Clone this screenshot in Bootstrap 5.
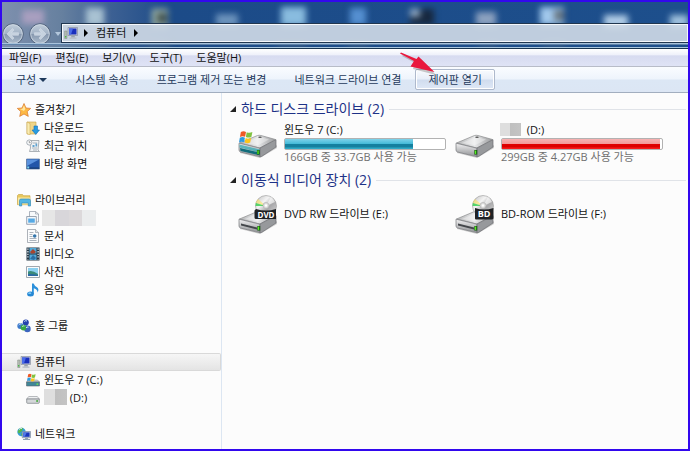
<!DOCTYPE html>
<html lang="ko">
<head>
<meta charset="utf-8">
<meta name="viewport" content="width=device-width, initial-scale=1">
<title>컴퓨터</title>
<link href="https://cdn.jsdelivr.net/npm/bootstrap@5.3.0/dist/css/bootstrap.min.css" rel="stylesheet">
<style>
body{font-family:"Open Sans","Noto Sans CJK KR",sans-serif;font-size:11px;line-height:18px;color:#111;background:#fcfcfc}
.win{border:2px solid #3208ee;min-height:100vh}
.win button,.win a{color:inherit;font:inherit;text-decoration:none;white-space:nowrap}
svg{display:block;flex:none}
.titlebar{height:47px;padding-top:21px;background:linear-gradient(90deg,#7e90ae 0,#66809f 60px,#3c6093 110px,#1c4b88 170px,#1d4f8c 100%);overflow:hidden}
.wallpaper{filter:blur(3px)}
.address{height:20px;border:1px solid #20364f;border-right:0;box-shadow:inset 0 0 0 1px #f4f7fb;background:rgba(214,223,233,.88);padding-left:2px}
.address .step{margin:0 8px 0 6px}
.shine{height:6px;border-top:1px solid #a9c3dc;border-bottom:1px solid #183550;box-shadow:inset 0 -1px #a9c6de,inset 0 1px #5f83a9}
.navbtns{width:59px}
.menus{height:18px;background:linear-gradient(#fff 0,#eef0fa 35%,#d7dbf0 40%,#dfe3f5 100%);border-bottom:1px solid #b8bcc8}
.menus button{padding:0 7px;line-height:17px}
.tools{height:26px;padding-top:2px;background:linear-gradient(#fafcff 0,#eef4fc 48%,#dce7f5 52%,#dce6f4 100%);border-bottom:1px solid #a2aebf;color:#1e395b}
.tools button{height:21px;padding:0 14px;line-height:19px}
.tools .raised{border:1px solid #aeb9cc!important;border-radius:2px;background:linear-gradient(#f9fbfe 0,#e8eef8 48%,#d0dcee 52%,#dfe8f6 100%);padding:0 12px;box-shadow:inset 0 0 0 1px #fff}
.caret{border:4px solid transparent;border-top-color:#1e395b;border-bottom:0;margin-left:3px}
.pointer{left:397px;top:49px;z-index:2}
.side{width:220px;border-right:1px solid #dce6f2;padding-top:8px}
.side a{height:18px;padding-left:15px;gap:4px}
.side a.sub{padding-left:24px}
.side .gap-row{height:18px}
.side a.active{border:1px solid #d9d9d9;border-left:0;border-radius:0 2px 2px 0;background:linear-gradient(#f6f6f6,#e4e4e4)}
.mosaic{display:inline-block;vertical-align:top;background:linear-gradient(90deg,#dedede 0,#dedede 48%,#bfbfbf 48%,#c4c4c4 100%)}
.mz1{width:54px;height:16px;margin-left:-2px;background:linear-gradient(90deg,#e6e6e6 0 25%,#d8d6da 25% 50%,#dcd9db 50% 74%,#ebedee 74%)}
.mz2{width:23px;height:16px}
.mz3{width:21px;height:13px;margin:1px 3px 0 -1px}
.pane{padding:7px 2px 0 8px}
.pane h2{font-size:14px;line-height:18px;color:#1e3287;margin:0;gap:5px;font-weight:400}
.pane h2 button{color:#1e3287}
.pane h2::after{content:"";flex:1;height:1px;background:#e0e3e8}
.tri{width:0;height:0;border-left:6px solid transparent;border-bottom:6px solid #222;margin-right:5px}
.drives{grid-template-columns:repeat(auto-fill,217px);padding-left:8px}
.drive{height:53px;gap:6px;padding-bottom:3px}
.drive .name{line-height:16px}
.drive .info{line-height:14px;color:#707070}
.meter{height:12px;width:162px;border:1px solid #b2b2b2;border-radius:2px;background:#fff;display:block}
.meter span{display:block;height:10px}
.teal{background:linear-gradient(#7fd3ea 0,#48bcd9 45%,#14809f 55%,#16809e 75%,#36b4d0 100%)}
.full{background:linear-gradient(#f6b3b3 0,#f39a9a 45%,#e00000 55%,#da0000 75%,#ff2020 100%)}
</style>
<script src="https://cdn.jsdelivr.net/npm/bootstrap@5.3.0/dist/js/bootstrap.bundle.min.js"></script>
</head>
<body>
<svg width="0" height="0" class="position-absolute" aria-hidden="true">
<defs>
<linearGradient id="top" x1="0" x2="1"><stop offset="0" stop-color="#b5b6b8"/><stop offset=".5" stop-color="#e8e9ea"/><stop offset="1" stop-color="#9a9b9d"/></linearGradient>
<linearGradient id="face" x1="0" y1="0" x2="0" y2="1"><stop offset="0" stop-color="#f3f3f4"/><stop offset="1" stop-color="#8d8f92"/></linearGradient>
<linearGradient id="disc" x1="0" x2="1" y1="0" y2="1"><stop offset="0" stop-color="#bbb"/><stop offset=".35" stop-color="#f4f4f4"/><stop offset=".6" stop-color="#a8a8aa"/><stop offset="1" stop-color="#ddd"/></linearGradient>
<linearGradient id="orb" x1="0" x2="0" y1="0" y2="1"><stop offset="0" stop-color="#c2cedb"/><stop offset=".48" stop-color="#a3b3c6"/><stop offset=".52" stop-color="#8798af"/><stop offset="1" stop-color="#b0c0d0"/></linearGradient>
<symbol id="pc" viewBox="0 0 14 14"><path d="M.7 5h2.200v7.500H.7z" fill="#b8c0b8" stroke="#7c857c" stroke-width=".5"/><path d="M1 10h1.300v1.500H1z" fill="#4b4"/><path d="M4 1.500h9.500v8H4z" fill="#c9ced8" stroke="#7c8597" stroke-width=".6"/><path d="M5 2.500h7.500v6H5z" fill="#1a2fbd"/><path d="M5 2.500h4l-2 6H5z" fill="#4a6be8"/><path d="M7.500 9.500h3l.6 2H7z" fill="#9aa2ad"/><path d="M5.500 11.500h7v1.300h-7z" fill="#b7bdc7"/></symbol>
<symbol id="flag" viewBox="0 0 12 12"><path d="M1.600 1.800Q3.800.4 6 1.700L5.200 5.800Q3 4.700 .8 6z" fill="#ef5a26"/><path d="M6.600 2Q9 3 11.500 1.800L10.600 6Q8.300 7 5.900 6z" fill="#80c241"/><path d="M.7 6.700Q3 5.400 5.100 6.600L4.300 10.500Q2.200 9.400 0 10.700z" fill="#2f9be0"/><path d="M5.700 6.900Q8 8 10.400 6.900L9.600 10.800Q7.300 11.900 4.900 10.800z" fill="#fcc51c"/></symbol>
<symbol id="hdd" viewBox="0 0 40 26"><path d="M2 19 22 25 39 13v3L22 26 2 21z" fill="#777" opacity=".35"/><path d="M1.500 11 19.500 3.500Q21 3 23 3.500L37.500 7.500 22 16z" fill="url(#top)" stroke="#8a8b8d" stroke-width=".7"/><path d="M1 11.200 22 16.200v8.600L2.500 20Q1 19.500 1 18z" fill="url(#face)" stroke="#77797c" stroke-width=".7"/><path d="M22 16 38 7.700v7.300L23.500 24.500 22 24.800z" fill="#97999c" stroke="#6d6f72" stroke-width=".7"/><path d="M7 11 21 5 31 7.500 20 13.300z" fill="#fff" opacity=".35"/><ellipse cx="22" cy="5.300" rx="1.800" ry=".8" fill="#555"/></symbol>
<symbol id="led" viewBox="0 0 4 6"><path d="M0 0h3.500v5.500H0z" fill="#1b5e17"/><path d="M.7.700h1.500v4H.7z" fill="#58f21e"/></symbol>
<symbol id="optical" viewBox="0 0 40 40"><use href="#hdd" x="0" y="14" width="40" height="26"/><path d="M3 29.500 19 33.500v2L3 31.500z" fill="#44474b"/><circle cx="28" cy="12" r="10.500" fill="url(#disc)" stroke="#999" stroke-width=".6"/><path d="M28 12 17.700 9A10.500 10.500 0 0 1 20 5z" fill="#ffe14a" opacity=".5"/><path d="M28 12 17.500 12 17.800 9z" fill="#32d04a" opacity=".8"/><path d="M28 12 33 3A10 10 0 0 1 37 8z" fill="#fff" opacity=".6"/><circle cx="28" cy="11.500" r="3" fill="#ddd" stroke="#aaa" stroke-width=".6"/><circle cx="28" cy="11.500" r="1.200" fill="#fff"/><use href="#led" x="19" y="32" width="4" height="5"/></symbol>
<symbol id="libs" viewBox="0 0 14 14"><path d="M.5 2.500 1.500 1.500h4l1 1.200h6.500v9H.5z" fill="#e9c95f" stroke="#c29d3a" stroke-width=".6"/><path d="M1 4.500h12v7H1z" fill="#fae9a3"/><path d="M2.500 13V7.500Q2.500 6 4 6h8q1.500 0 1.500 1.500V13h-2.200V10H4.700v3z" fill="#54b6e3" stroke="#2986b8" stroke-width=".6"/></symbol>
</defs>
</svg>
<div class="win d-flex flex-column position-relative">
<header class="titlebar position-relative">
  <svg class="wallpaper position-absolute top-0 start-0" width="100%" height="47" viewBox="0 0 686 47" preserveAspectRatio="xMinYMin slice" aria-hidden="true">
    <path d="M20 8h22v14H20z" fill="#a99fc0"/><path d="M84 6h18v18H84z" fill="#a9c2d2"/><path d="M150 7h16v18h-16z" fill="#9db3a5"/><path d="M155 11h10v10h-10z" fill="#40504f"/><path d="M214 12h22v12h-22z" fill="#6d94bd"/><path d="M279 5h25v19h-25z" fill="#89bcdf"/><path d="M348 6h16v17h-16z" fill="#5590d1"/><path d="M408 7h24v16h-24z" fill="#17283f"/><path d="M408 7h10v8h-10z" fill="#91a9c1"/><path d="M474 10h20v14h-20z" fill="#8da2c0"/><path d="M538 5h24v18h-24z" fill="#a2c9ed"/><path d="M552 8h10v11h-10z" fill="#687681"/><path d="M602 13h24v12h-24z" fill="#b4cfe8"/><path d="M668 13h20v12h-20z" fill="#a2c3df"/>
    <path d="M82 40h24v4H82zM145 40h24v4h-24zM275 40h30v4h-30zM345 40h22v4h-22zM476 40h20v4h-20zM540 40h24v4h-24z" fill="#65757f" opacity=".6"/>
  </svg>
  <div class="d-flex position-relative">
    <div class="navbtns d-flex align-items-center">
      <button type="button" class="btn border-0 p-0" aria-label="뒤로"><svg width="23" height="22" viewBox="0 0 23 22"><circle cx="11" cy="11" r="10.300" fill="url(#orb)" stroke="#52637d"/><circle cx="11" cy="11" r="9.300" fill="none" stroke="#d0dae5" stroke-width=".8"/><path d="M5 11l5.500-5.500 1.500 1.500-2.500 2.700h7v2.600h-7l2.500 2.700-1.500 1.500z" fill="#c6d2df" stroke="#dbe3ec" stroke-width=".5"/></svg></button>
      <button type="button" class="btn border-0 p-0 ms-1" aria-label="앞으로"><svg width="22" height="22" viewBox="0 0 22 22"><circle cx="11" cy="11" r="10.300" fill="url(#orb)" stroke="#52637d"/><circle cx="11" cy="11" r="9.300" fill="none" stroke="#d0dae5" stroke-width=".8"/><path d="M17 11l-5.500-5.500L10 7l2.500 2.700h-7v2.600h7L10 15l1.500 1.500z" fill="#c6d2df" stroke="#dbe3ec" stroke-width=".5"/></svg></button>
      <svg class="ms-1" width="6" height="4" viewBox="0 0 6 4"><path d="M0 0h6L3 4z" fill="#b3c7dc"/></svg>
    </div>
    <nav class="address d-flex align-items-center flex-fill" aria-label="주소">
      <svg width="14" height="14"><use href="#pc"/></svg>
      <svg class="step" width="4" height="8" viewBox="0 0 4 8"><path d="M0 0l4 4-4 4z" fill="#000"/></svg>
      <a href="#">컴퓨터</a>
      <svg class="mx-2" width="4" height="8" viewBox="0 0 4 8"><path d="M0 0l4 4-4 4z" fill="#000"/></svg>
    </nav>
  </div>
  <div class="shine position-absolute bottom-0 start-0 end-0"></div>
</header>
<nav class="menus d-flex" aria-label="메뉴">
  <button type="button" class="btn border-0 rounded-0">파일(F)</button><button type="button" class="btn border-0 rounded-0">편집(E)</button><button type="button" class="btn border-0 rounded-0">보기(V)</button><button type="button" class="btn border-0 rounded-0">도구(T)</button><button type="button" class="btn border-0 rounded-0">도움말(H)</button>
</nav>
<div class="tools d-flex" role="toolbar" aria-label="도구 모음">
  <button type="button" class="btn border-0 d-flex align-items-center">구성 <span class="caret"></span></button>
  <button type="button" class="btn border-0">시스템 속성</button>
  <button type="button" class="btn border-0">프로그램 제거 또는 변경</button>
  <button type="button" class="btn border-0">네트워크 드라이브 연결</button>
  <button type="button" class="btn raised">제어판 열기</button>
</div>
<svg class="pointer position-absolute" width="38" height="25" viewBox="0 0 38 25" aria-hidden="true"><path d="M3 5 16 12l-2 6 23 6L22 8l-3 3L4 4z" fill="#777" opacity=".4"/><path d="M1 2.500 15 10l-3.500 5.500 24 5.500L19.500 5.500 17.500 8 2 1.500z" fill="#e9183d"/></svg>
<div class="d-flex flex-fill">
  <nav class="side flex-shrink-0 d-flex flex-column" aria-label="탐색 창">
    <a href="#" class="d-flex align-items-center"><svg width="14" height="14" viewBox="0 0 14 14"><path d="M7 .5 9 5l4.700.4-3.500 3.200 1.100 4.800L7 11l-4.300 2.400 1.100-4.800L.3 5.400 5 5z" fill="#fdb944" stroke="#d9742a" stroke-width=".7"/><path d="M7 2.200 8.300 6 7 8 3 6l2.500-.3z" fill="#ffe7a0"/></svg>즐겨찾기</a>
    <a href="#" class="sub d-flex align-items-center"><svg width="14" height="14" viewBox="0 0 14 14"><path d="M1 1h9v12H1z" fill="#efd588" stroke="#c7a145" stroke-width=".6"/><path d="M1 1l3 1.500V14l-3-1.500z" fill="#f9ecb2" stroke="#c7a145" stroke-width=".5"/><path d="M8 5h3.500v4h2L9.800 13.500 6 9h2z" fill="#279ce1" stroke="#1871b5" stroke-width=".6"/></svg>다운로드</a>
    <a href="#" class="sub d-flex align-items-center"><svg width="14" height="14" viewBox="0 0 14 14"><path d="M4 1.500h9l-1 9.500 1.500 1.500H3.500L4.500 9z" fill="#f0f2f4" stroke="#8c939b" stroke-width=".7"/><path d="M7 4h4M6 9h5M7 11h4" stroke="#9ba5ae" stroke-width=".8"/><path d="M6.500 6h2v2h-2zM9.500 4.500h1.700v3H9.500z" fill="#60a2cf"/><circle cx="3.300" cy="3.500" r="2.600" fill="#f8f9fa" stroke="#969ea7" stroke-width=".8"/><path d="M3.300 2v1.700h1.300" fill="none" stroke="#666" stroke-width=".6"/></svg>최근 위치</a>
    <a href="#" class="sub d-flex align-items-center"><svg width="14" height="14" viewBox="0 0 14 14"><path d="M.5 2h13v10H.5z" fill="#2356a9" stroke="#58749b" stroke-width=".7"/><path d="M1 2.500h12L1 9z" fill="#5b92dd"/><path d="M1 10.500h12v1.200H1z" fill="#173a70"/><path d="M1.200 9.500h2v2h-2z" fill="#7fd4ef"/></svg>바탕 화면</a>
    <div class="gap-row"></div>
    <a href="#" class="d-flex align-items-center"><svg width="14" height="14"><use href="#libs"/></svg>라이브러리</a>
    <a href="#" class="sub d-flex align-items-center" aria-label="라이브러리 항목"><svg width="14" height="14" viewBox="0 0 14 14"><path d="M3.500.5h6l3 2.500v8h-9z" fill="#f7f9fb" stroke="#8b95a3" stroke-width=".7"/><path d="M9.500.5V3h3" fill="none" stroke="#8b95a3" stroke-width=".6"/><path d="M.7 5.500h9.600v7.800H.7z" fill="#f4f8fc" stroke="#758293" stroke-width=".7"/><path d="M2.200 7.500h6.600v4.200H2.200z" fill="#56a9e4"/></svg><span class="mosaic mz1"></span></a>
    <a href="#" class="sub d-flex align-items-center"><svg width="14" height="14" viewBox="0 0 14 14"><path d="M1.500.5h8l3 3v10h-11z" fill="#fbfcfd" stroke="#8b929b" stroke-width=".7"/><path d="M9.500.5v3h3" fill="#e0e4e8" stroke="#8b929b" stroke-width=".6"/><path d="M3.500 3.500h4M3.500 5.500h3M3.500 7.500h3M3.500 9.500h7M3.500 11.500h7" stroke="#98a1ac" stroke-width=".8"/><circle cx="8.700" cy="7" r="1.800" fill="#3476ac"/></svg>문서</a>
    <a href="#" class="sub d-flex align-items-center"><svg width="14" height="14" viewBox="0 0 14 14"><path d="M.5.5h13v13H.5z" fill="#263846"/><path d="M3.500 1h7v5.500h-7zM3.500 7.500h7V13h-7z" fill="#52a9d8"/><path d="M4 5l3-3 3 3-2 1.500H5z" fill="#a8452e"/><path d="M4 12l3-4 3 3-2 2z" fill="#2c6ea3"/><path d="M1.900 1.500v11M12.100 1.500v11" stroke="#dce7ef" stroke-width="1.300" stroke-dasharray="1.300 1.300"/></svg>비디오</a>
    <a href="#" class="sub d-flex align-items-center"><svg width="14" height="14" viewBox="0 0 14 14"><path d="M.5 1.500h13v11H.5z" fill="#fafbfb" stroke="#8a939c" stroke-width=".8"/><path d="M2 3h10v8H2z" fill="#8cd0ef"/><path d="M2 6.500q4-2 10 2.500v2H2z" fill="#3b8a79"/><path d="M2 9q5-.5 10 1v1H2z" fill="#2a69a3"/></svg>사진</a>
    <a href="#" class="sub d-flex align-items-center"><svg width="14" height="14" viewBox="0 0 14 14"><path d="M6 .5h1.600Q8.500 3 11 4.300q2.500 2 .5 5.200.3-3-3.700-4.200V11H6z" fill="#2b90db"/><ellipse cx="4.500" cy="11" rx="3.400" ry="2.500" fill="#2688d4"/><ellipse cx="3.700" cy="10.200" rx="1.600" ry=".9" fill="#7cc5f2"/></svg>음악</a>
    <div class="gap-row"></div>
    <a href="#" class="d-flex align-items-center"><svg width="14" height="14" viewBox="0 0 14 14"><path d="M3.500 7 8.500 3.500 10.500 10z" fill="none" stroke="#7aa9cf" stroke-width="1.500"/><circle cx="3.300" cy="7" r="3" fill="#3c79cb"/><circle cx="8.800" cy="3.600" r="3" fill="#2542ae"/><circle cx="10.400" cy="9.900" r="3.300" fill="#3c65bf"/><circle cx="6.500" cy="8.600" r="2.900" fill="#39a743"/><path d="M1.700 6q1-1.700 2.700-1M7.300 2.500q1-1.300 2.700-.5M5.200 7.500q1-1 2.200-.5M9 8.800q1-1.300 2.500-.6" stroke="#d6ecff" stroke-width="1" fill="none"/></svg>홈 그룹</a>
    <div class="gap-row"></div>
    <a href="#" class="active d-flex align-items-center" aria-current="page"><svg width="14" height="14"><use href="#pc"/></svg>컴퓨터</a>
    <a href="#" class="sub d-flex align-items-center"><svg width="14" height="14" viewBox="0 0 14 14"><path d="M.5 9 2.500 7h9l2 2z" fill="#cfd2d4" stroke="#83888d" stroke-width=".5"/><path d="M.5 9h13v4H.5z" fill="#3f8798" stroke="#60676d" stroke-width=".6"/><path d="M10.500 10.500h1.700v1.300h-1.700z" fill="#76ee42"/><use href="#flag" x="1" y="0" width="9" height="9"/></svg>윈도우 7 (C:)</a>
    <a href="#" class="sub d-flex align-items-center"><svg width="14" height="14" viewBox="0 0 14 14"><path d="M.7 8 2.700 5.500h8.600L13.300 8z" fill="#eef0f1" stroke="#8d9297" stroke-width=".6"/><path d="M.7 8h12.600v3.500q0 .8-.8.800h-11q-.8 0-.8-.8z" fill="#d4d7d9" stroke="#777c81" stroke-width=".7"/><path d="M10.200 9.300h1.800v1.500h-1.800z" fill="#38a52d"/></svg><span><span class="mosaic mz2"></span> (D:)</span></a>
    <div class="gap-row"></div>
    <a href="#" class="d-flex align-items-center"><svg width="14" height="14" viewBox="0 0 14 14"><circle cx="4.500" cy="5" r="4.200" fill="#359fd5"/><path d="M2 2q2-2 4-1L5 4 2 6.500.7 5zM4 7l3-2v3L5 9z" fill="#55b84c"/><path d="M2 2.500q1.500-1.500 3-1.200" stroke="#d9f1ff" fill="none"/><path d="M5.300 4.500h8.200v6.200H5.300z" fill="#c8d4e2" stroke="#6a7b93" stroke-width=".6"/><path d="M6.200 5.400h6.400v4.400H6.200z" fill="#1b36bd"/><path d="M6.200 5.400h3.500l-2 4.400H6.200z" fill="#527be6"/><path d="M8.300 10.700h2.400l.5 1.300H13v1H6v-1h1.900z" fill="#8fa0b2"/></svg>네트워크</a>
  </nav>
  <main class="pane flex-fill">
    <h2 class="d-flex align-items-center"><button type="button" class="btn border-0 rounded-0 p-0 d-flex align-items-center"><span class="tri"></span>하드 디스크 드라이브 (2)</button></h2>
    <div class="drives d-grid">
      <div class="drive d-flex align-items-center">
        <svg width="40" height="38" viewBox="0 0 40 38"><use href="#hdd" x="0" y="8" width="40" height="26"/><path d="M2 24 21.500 28.500v2.700L2.500 27z" fill="#116d7b"/><path d="M1.500 20.500 22 25.500v3L1.500 23.500z" fill="#33a8b2" opacity=".75"/><use href="#led" x="18.500" y="26" width="4" height="5"/><use href="#flag" x="1" y="6" width="14" height="14"/></svg>
        <div><div class="name">윈도우 7 (C:)</div><div class="meter" role="progressbar" aria-label="윈도우 7 (C:)" aria-valuenow="80" aria-valuemin="0" aria-valuemax="100"><span class="teal" style="width:80%"></span></div><div class="info">166GB 중 33.7GB 사용 가능</div></div>
      </div>
      <div class="drive d-flex align-items-center">
        <svg width="40" height="38" viewBox="0 0 40 38"><use href="#hdd" x="0" y="8" width="40" height="26"/><use href="#led" x="19" y="26" width="4" height="5"/></svg>
        <div><div class="name"><span class="mosaic mz3"></span> (D:)</div><div class="meter" role="progressbar" aria-label="D:" aria-valuenow="99" aria-valuemin="0" aria-valuemax="100"><span class="full" style="width:99%"></span></div><div class="info">299GB 중 4.27GB 사용 가능</div></div>
      </div>
    </div>
    <h2 class="d-flex align-items-center"><button type="button" class="btn border-0 rounded-0 p-0 d-flex align-items-center"><span class="tri"></span>이동식 미디어 장치 (2)</button></h2>
    <div class="drives d-grid">
      <div class="drive d-flex align-items-center">
        <svg width="40" height="40" viewBox="0 0 40 40"><use href="#optical"/><path d="M18 15q10 3 20 0v10H18q-1.500 0-1.500-1.500v-7z" fill="#202225"/><text x="28" y="23.500" text-anchor="middle" font-size="8" font-weight="700" fill="#fff" font-family="Open Sans,sans-serif">DVD</text></svg>
        <span>DVD RW 드라이브 (E:)</span>
      </div>
      <div class="drive d-flex align-items-center">
        <svg width="40" height="40" viewBox="0 0 40 40"><use href="#optical"/><path d="M20 14q9 3 18.500 0v10.500q-1 1-2 1H21q-1 0-1-1z" fill="#202225"/><text x="29" y="23" text-anchor="middle" font-size="9" font-weight="700" fill="#fff" font-family="Open Sans,sans-serif">BD</text></svg>
        <span>BD-ROM 드라이브 (F:)</span>
      </div>
    </div>
  </main>
</div>
</div>
</body>
</html>
